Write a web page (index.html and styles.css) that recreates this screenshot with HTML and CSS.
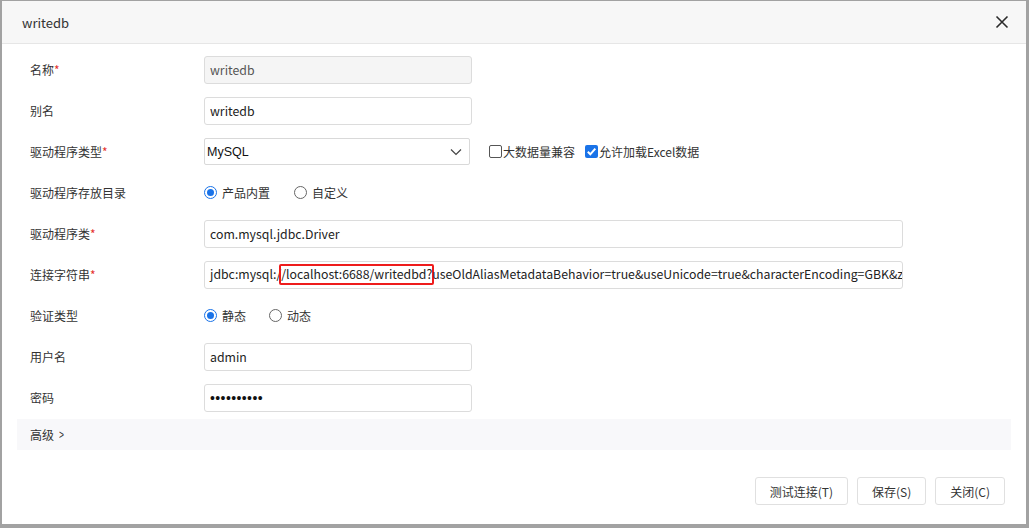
FILE: index.html
```html
<!DOCTYPE html>
<html lang="zh-CN">
<head>
    <meta charset="UTF-8">
    <title>writedb</title>
    <link rel="stylesheet" href="styles.css">
</head>
<body>
    <div class="dialog">
        <div class="dialog-head">
            <span class="dialog-title">writedb</span>
            <span class="dialog-close">
                <svg width="14" height="14" viewBox="0 0 14 14"><path d="M1.5 1.5L12.5 12.5M12.5 1.5L1.5 12.5" stroke="#2b2b2b" stroke-width="1.6" fill="none"/></svg>
            </span>
        </div>

        <div class="form">
            <div class="row">
                <label class="label">名称<i>*</i></label>
                <div class="field"><input class="input disabled" type="text" value="writedb" disabled></div>
            </div>
            <div class="row">
                <label class="label">别名</label>
                <div class="field"><input class="input" type="text" value="writedb"></div>
            </div>
            <div class="row">
                <label class="label">驱动程序类型<i>*</i></label>
                <div class="field">
                    <div class="select">
                        <span>MySQL</span>
                        <svg width="12" height="8" viewBox="0 0 12 8"><path d="M1 1.5L6 6.5L11 1.5" stroke="#444" stroke-width="1.2" fill="none"/></svg>
                    </div>
                    <span class="check"><span class="box"></span>大数据量兼容</span>
                    <span class="check"><span class="box on"><svg width="13" height="13" viewBox="0 0 13 13"><path d="M2.8 6.8L5.3 9.3L10.3 3.6" stroke="#fff" stroke-width="2" fill="none"/></svg></span>允许加载Excel数据</span>
                </div>
            </div>
            <div class="row">
                <label class="label">驱动程序存放目录</label>
                <div class="field">
                    <span class="radio"><span class="dot on"></span>产品内置</span>
                    <span class="radio gap-lg"><span class="dot"></span>自定义</span>
                </div>
            </div>
            <div class="row">
                <label class="label">驱动程序类<i>*</i></label>
                <div class="field"><input class="input wide" type="text" value="com.mysql.jdbc.Driver"></div>
            </div>
            <div class="row">
                <label class="label">连接字符串<i>*</i></label>
                <div class="field">
                    <div class="input wide url">
                        <span class="url-text">jdbc:mysql:/<span class="mark">/localhost:6688/writedbd?</span>useOldAliasMetadataBehavior=true&amp;useUnicode=true&amp;characterEncoding=GBK&amp;zeroDateTimeBehavior</span>
                    </div>
                </div>
            </div>
            <div class="row">
                <label class="label">验证类型</label>
                <div class="field">
                    <span class="radio"><span class="dot on"></span>静态</span>
                    <span class="radio gap-sm"><span class="dot"></span>动态</span>
                </div>
            </div>
            <div class="row">
                <label class="label">用户名</label>
                <div class="field"><input class="input" type="text" value="admin"></div>
            </div>
            <div class="row">
                <label class="label">密码</label>
                <div class="field"><input class="input pwd" type="password" value="1234567890"></div>
            </div>
        </div>

        <div class="advanced">高级 <span class="arrow">&gt;</span></div>

        <div class="footer">
            <button class="btn">测试连接(T)</button>
            <button class="btn">保存(S)</button>
            <button class="btn">关闭(C)</button>
        </div>
    </div>
</body>
</html>
```

FILE: styles.css
```css
*{
    margin: 0;
    padding: 0;
    box-sizing: border-box;
}

html, body{
    height: 100%;
}

body{
    background: #a2a2a2;
    padding: 1px 3px 4px 2px;
    font-family: "Noto Sans CJK SC", "Noto Sans", sans-serif;
    font-size: 12px;
    color: #333;
}

.dialog{
    height: 100%;
    background: #fff;
    display: flex;
    flex-direction: column;
}

.dialog-head{
    height: 43px;
    flex: none;
    display: flex;
    align-items: center;
    justify-content: space-between;
    padding: 0 17px 0 20px;
    background: #f7f7f7;
    border-bottom: 1px solid #e6e6e6;
}

.dialog-title{
    font-size: 13px;
    color: #333;
}

.dialog-close{
    display: flex;
    cursor: pointer;
}

.form{
    padding: 5px 0 0 28px;
}

.row{
    height: 41px;
    display: flex;
    align-items: center;
}

.label{
    width: 174px;
    flex: none;
    color: #333;
}

.label i{
    font-style: normal;
    color: #e5322d;
}

.field{
    display: flex;
    align-items: center;
}

.input{
    width: 268px;
    height: 28px;
    padding: 0 5px;
    border: 1px solid #dcdcdc;
    border-radius: 3px;
    background: #fff;
    font-family: "Noto Sans CJK SC", "Noto Sans", sans-serif;
    font-size: 12.3px;
    color: #222;
    outline: none;
}

.input.disabled{
    background: #f5f5f5;
    color: #555;
}

.input.wide{
    width: 699px;
}

.input.pwd{
    font-family: "Liberation Sans", Arial, sans-serif;
    font-size: 14px;
    letter-spacing: .4px;
    color: #111;
}

.url{
    display: flex;
    align-items: center;
    overflow: hidden;
    white-space: nowrap;
}

.url-text{
    color: #222;
}

.mark{
    display: inline-block;
    border: 2px solid #ee1c1c;
    border-radius: 2px;
    line-height: 17px;
    margin: 0 -2px 0 -2px;
    padding: 0;
}

.select{
    width: 266px;
    height: 27px;
    padding: 0 7px 0 2px;
    border: 1px solid #d9d9d9;
    border-radius: 2px;
    display: flex;
    align-items: center;
    justify-content: space-between;
    font-family: "Liberation Sans", Arial, sans-serif;
    font-size: 12.5px;
    color: #111;
}

.check{
    display: flex;
    align-items: center;
    font-size: 12px;
    color: #333;
    margin-left: 19px;
}

.check + .check{
    margin-left: 10px;
}

.box{
    width: 13px;
    height: 13px;
    border: 1px solid #555;
    border-radius: 2px;
    margin-right: 1px;
    display: flex;
}

.box.on{
    border: none;
    background: #1a73e8;
}

.radio{
    display: flex;
    align-items: center;
    color: #333;
}

.gap-lg{
    margin-left: 24px;
}

.gap-sm{
    margin-left: 23px;
}

.dot{
    width: 13px;
    height: 13px;
    border: 1px solid #666;
    border-radius: 50%;
    margin-right: 5px;
    position: relative;
}

.dot.on{
    border: 1.5px solid #1a73e8;
}

.dot.on:after{
    content: '';
    position: absolute;
    left: 1.5px;
    top: 1.5px;
    width: 7px;
    height: 7px;
    border-radius: 50%;
    background: #1a73e8;
}

.advanced{
    height: 31px;
    margin: 1px 15px 0;
    padding-left: 13px;
    display: flex;
    align-items: center;
    background: #f8f8fa;
    color: #333;
}

.arrow{
    margin-left: 4px;
    font-family: "Liberation Sans", sans-serif;
    transform: scaleX(.7);
    display: inline-block;
}

.footer{
    display: flex;
    justify-content: flex-end;
    gap: 9px;
    padding: 27px 21px 0 0;
}

.btn{
    height: 28px;
    padding: 0 14px;
    border: 1px solid #e0e0e0;
    border-radius: 3px;
    background: #fff;
    font-family: "Noto Sans CJK SC", "Noto Sans", sans-serif;
    font-size: 12px;
    color: #333;
    cursor: pointer;
}
```
